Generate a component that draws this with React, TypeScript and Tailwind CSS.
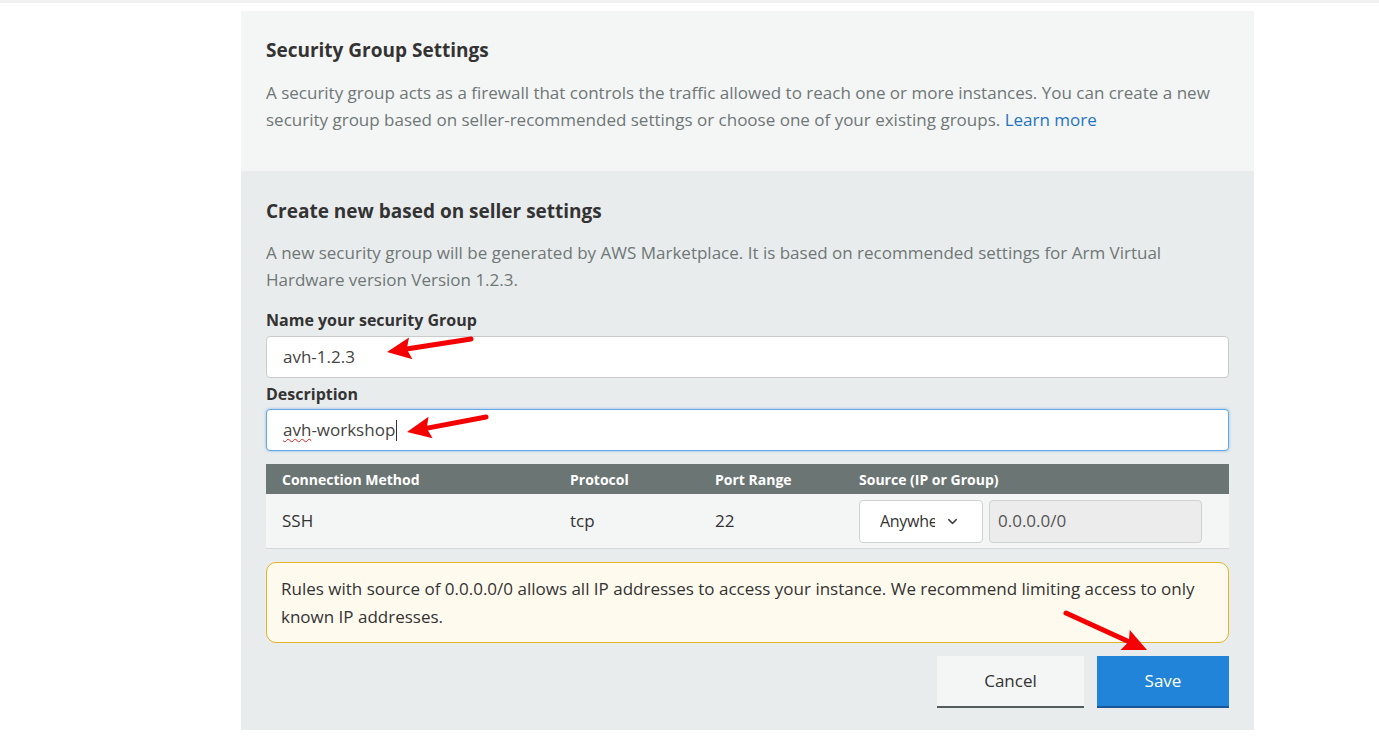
import { ChevronDown } from 'lucide-react';

const font = { fontFamily: '"Open Sans", "Noto Sans", Arial, sans-serif' };

// red annotation arrows laid over the screenshot
const arrows = [
  { tail: [471, 339], tip: [387, 352] },
  { tail: [486, 417], tip: [407, 432] },
  { tail: [1066, 613], tip: [1147, 650] },
];

function Arrow({ tail, tip }: { tail: number[]; tip: number[] }) {
  const dx = tip[0] - tail[0];
  const dy = tip[1] - tail[1];
  const len = Math.hypot(dx, dy);
  const ux = dx / len;
  const uy = dy / len;
  const bx = tip[0] - 24 * ux;
  const by = tip[1] - 24 * uy;
  const nx = -uy;
  const ny = ux;
  const pts = `${tip[0]},${tip[1]} ${bx + 11 * nx},${by + 11 * ny} ${bx + 4 * ux},${by + 4 * uy} ${bx - 11 * nx},${by - 11 * ny}`;
  return (
    <g>
      <line x1={tail[0]} y1={tail[1]} x2={bx + 6 * ux} y2={by + 6 * uy} stroke="#f50000" strokeWidth={5} strokeLinecap="round" />
      <polygon points={pts} fill="#f50000" />
    </g>
  );
}

export default function App() {
  return (
    <div className="relative min-h-[755px] bg-white text-[#333]" style={font}>
      <div className="h-[11px] border-t-[3px] border-[#f1f1f1]" />

      <div className="ml-[241px] w-[1013px]">
        {/* Intro */}
        <section className="bg-[#f4f5f5] px-[25px] pt-[25px] pb-[38px]">
          <h2 className="text-[19px] leading-[28px] font-bold text-[#333]">Security Group Settings</h2>
          <p className="mt-[15px] text-[17px] leading-[27px] text-[#6f7777]">
            A security group acts as a firewall that controls the traffic allowed to reach one or more instances. You can create a new
            <br />
            security group based on seller-recommended settings or choose one of your existing groups.{' '}
            <a className="text-[#1f75bf]">Learn more</a>
          </p>
        </section>

        {/* Create new */}
        <section className="bg-[#e9ecec] px-[25px] pt-[26px] pb-[22px]">
          <h3 className="text-[19px] leading-[28px] font-bold text-[#333]">Create new based on seller settings</h3>
          <p className="mt-[14px] text-[17px] leading-[27px] text-[#6f7777]">
            A new security group will be generated by AWS Marketplace. It is based on recommended settings for Arm Virtual
            <br />
            Hardware version Version 1.2.3.
          </p>

          <label className="mt-[15px] block text-[16px] leading-[24px] font-bold text-[#333]">Name your security Group</label>
          <div className="mt-1 flex h-[42px] items-center rounded-[4px] border border-[#c9cbcb] bg-white px-4 text-[17px] text-[#444]">
            avh-1.2.3
          </div>

          <label className="mt-1 block text-[16px] leading-[24px] font-bold text-[#333]">Description</label>
          <div className="mt-[3px] flex h-[42px] items-center rounded-[4px] border border-[#62a8e8] bg-white px-4 text-[17px] text-[#444] shadow-[0_0_3px_rgba(80,150,230,0.6)]">
            <span className="underline decoration-wavy decoration-[#e02020] decoration-1 underline-offset-2">avh</span>
            <span>-workshop</span>
            <span className="ml-[1px] h-[21px] w-px bg-[#333]" />
          </div>

          {/* Rules table */}
          <div className="mt-[13px]">
            <div className="grid h-[30px] grid-cols-[288px_145px_144px_1fr] items-center bg-[#6b7574] pl-4 text-[14px] font-bold text-white">
              <span>Connection Method</span>
              <span>Protocol</span>
              <span>Port Range</span>
              <span>Source (IP or Group)</span>
            </div>
            <div className="grid h-[55px] grid-cols-[288px_145px_144px_1fr] items-center border-b border-[#d5d8d8] bg-[#f4f5f5] pl-4 text-[17px] text-[#333]">
              <span>SSH</span>
              <span>tcp</span>
              <span>22</span>
              <div className="flex items-center gap-[6px]">
                <div className="flex h-[43px] w-[124px] items-center rounded-[4px] border border-[#cfd2d2] bg-white pl-[20px] pr-[22px]">
                  <span className="w-[55px] overflow-hidden whitespace-nowrap text-[16px] tracking-[-0.3px] text-[#333]">Anywhere</span>
                  <ChevronDown size={15} strokeWidth={2.4} className="ml-auto text-[#444]" />
                </div>
                <div className="flex h-[43px] w-[213px] items-center rounded-[4px] border border-[#cfd2d2] bg-[#ececec] px-[8px] text-[#555]">
                  0.0.0.0/0
                </div>
              </div>
            </div>
          </div>

          {/* Warning */}
          <div className="mt-[13px] rounded-[10px] border border-[#e2b42a] bg-[#fffaee] px-[14px] pt-[12px] pb-[11px] text-[17px] leading-[28px] text-[#333]">
            Rules with source of 0.0.0.0/0 allows all IP addresses to access your instance. We recommend limiting access to only
            <br />
            known IP addresses.
          </div>

          {/* Actions */}
          <div className="mt-[13px] flex justify-end gap-[13px]">
            <button className="h-[52px] w-[147px] border-b-2 border-[#545b5b] bg-[#f4f5f5] text-[17px] text-[#333]">Cancel</button>
            <button className="h-[52px] w-[132px] border-b-2 border-[#18589a] bg-[#2184d9] text-[17px] text-white">Save</button>
          </div>
        </section>
      </div>

      <svg className="pointer-events-none absolute inset-0" width="1379" height="755">
        {arrows.map((a, i) => (
          <Arrow key={i} tail={a.tail} tip={a.tip} />
        ))}
      </svg>
    </div>
  );
}
